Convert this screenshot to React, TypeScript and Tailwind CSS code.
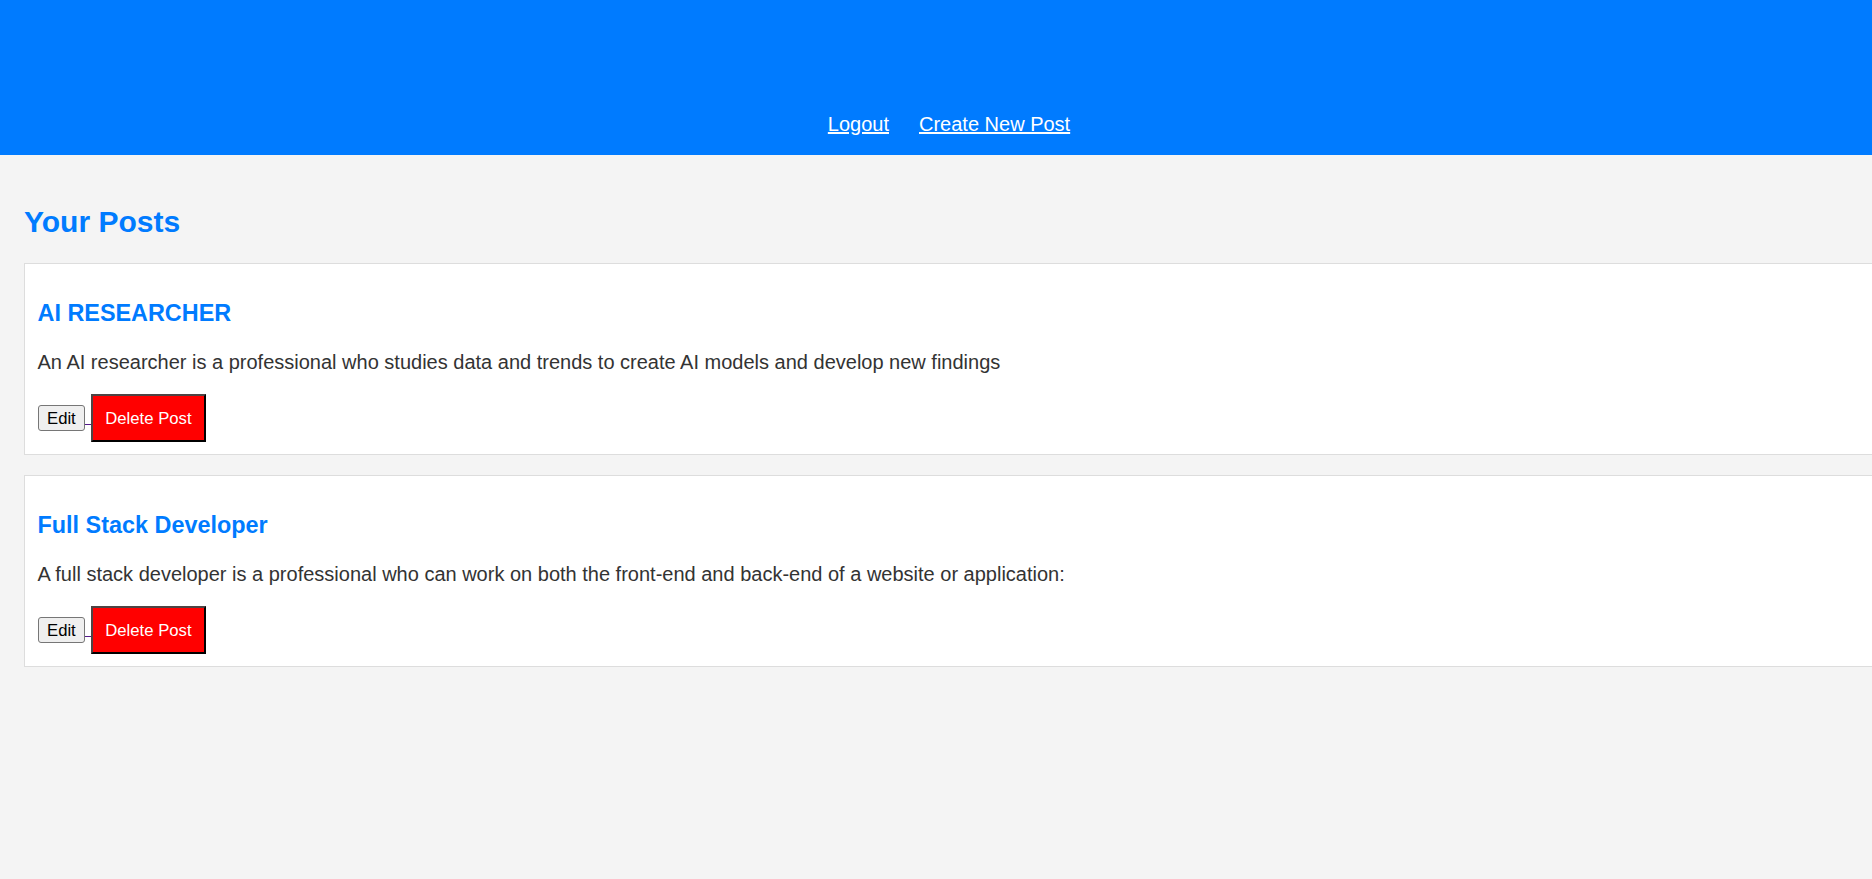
const posts = [
  {
    title: "AI RESEARCHER",
    body: "An AI researcher is a professional who studies data and trends to create AI models and develop new findings",
  },
  {
    title: "Full Stack Developer",
    body: "A full stack developer is a professional who can work on both the front-end and back-end of a website or application:",
  },
];

function PostCard({ title, body }: { title: string; body: string }) {
  return (
    <div className="w-[calc(100%+40px)] border border-[#dddddd] bg-white px-[12.5px] pt-[36px] pb-[12px]">
      <h3 className="text-[23.4px] leading-[27px] font-bold text-[#007bff]">{title}</h3>
      <p className="mt-[24px] text-[20px] leading-[23px] text-[#333333]">{body}</p>

      <div className="mt-[20px] flex items-center">
        <button className="rounded-[3px] border border-[#767676] bg-[#efefef] px-[8.5px] py-[2.5px] text-[16.7px] leading-[19px] text-black">
          Edit
        </button>
        <span className="mb-[17px] h-px w-[6px] self-end bg-[#551a8b]"></span>
        <button className="border-2 border-t-[#4d4444] border-l-[#4d4444] border-r-black border-b-black bg-[#ff0000] px-[12px] py-[12.7px] text-[16.7px] leading-[19px] text-white">
          Delete Post
        </button>
      </div>
    </div>
  );
}

export default function App() {
  return (
    <div className="min-h-[879px] overflow-hidden bg-[#f4f4f4] font-['Liberation_Sans',Arial,sans-serif]">
      {/* Header */}
      <header className="flex h-[155px] items-end justify-center bg-[#007bff] pb-[19.5px] pl-[26px]">
        <nav className="flex gap-[30px] text-[20px] leading-[23px] text-white">
          <a href="#" className="underline">Logout</a>
          <a href="#" className="underline">Create New Post</a>
        </nav>
      </header>

      <main className="px-[24px] pt-[49.5px]">
        <h2 className="text-[30px] leading-[34.5px] font-bold text-[#007bff]">Your Posts</h2>

        <div className="mt-[24px] flex flex-col gap-[19.5px]">
          {posts.map((p) => (
            <PostCard key={p.title} title={p.title} body={p.body} />
          ))}
        </div>
      </main>
    </div>
  );
}
